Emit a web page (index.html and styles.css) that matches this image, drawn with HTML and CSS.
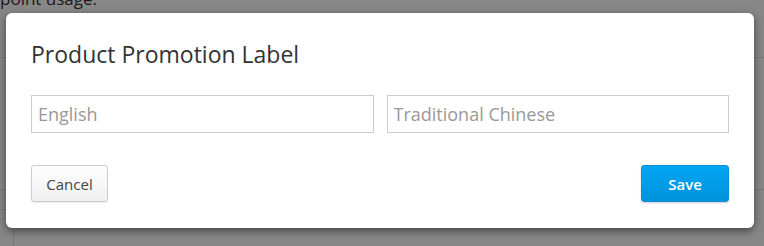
FILE: index.html
```html
<!DOCTYPE html>
<html>
<head>
<meta charset="utf-8">
<link rel="stylesheet" href="styles.css">
</head>
<body>
<div class="page">
  <p class="bg-text">point usage:</p>
  <div class="bg-line bg-line-top"></div>
  <div class="bg-line bg-line-mid"></div>
  <div class="bg-line bg-line-low"></div>
  <div class="bg-vline"></div>
</div>
<div class="overlay"></div>
<div class="modal">
  <h2 class="modal-title">Product Promotion Label</h2>
  <div class="fields">
    <input class="field" type="text" placeholder="English">
    <input class="field" type="text" placeholder="Traditional Chinese">
  </div>
  <div class="actions">
    <button class="btn btn-default">Cancel</button>
    <button class="btn btn-primary">Save</button>
  </div>
</div>
</body>
</html>
```
FILE: styles.css
```css
* { box-sizing: border-box; }
html, body {
  margin: 0;
  padding: 0;
  width: 764px;
  height: 246px;
  overflow: hidden;
  font-family: "Open Sans", "Liberation Sans", sans-serif;
}
body { background: #fff; position: relative; }

.page { position: relative; width: 764px; height: 246px; }
.bg-text {
  margin: 0;
  position: absolute;
  left: 0;
  top: -13px;
  font-size: 17px;
  line-height: 24px;
  color: #333;
}
.bg-line { position: absolute; height: 1px; background: #e0e0e0; left: 0; right: 0; }
.bg-line-top { top: 57px; }
.bg-line-mid { top: 189px; }
.bg-line-low { top: 209px; right: auto; width: 6px; }
.bg-vline { position: absolute; left: 13px; top: 228px; bottom: 0; width: 1px; background: #e0e0e0; }

.overlay {
  position: absolute;
  inset: 0;
  background: rgba(0, 0, 0, 0.47);
}

.modal {
  position: absolute;
  left: 6px;
  top: 13px;
  width: 748px;
  height: 215px;
  background: #fff;
  border-radius: 6px;
  box-shadow: 0 3px 9px rgba(0, 0, 0, 0.5);
  padding: 26px 25px 0 25px;
  display: flex;
  flex-direction: column;
}

.modal-title {
  margin: 0;
  font-size: 23px;
  font-weight: 400;
  color: #333;
  line-height: 31px;
}

.fields {
  display: flex;
  gap: 13px;
  margin-top: 25px;
}
.field {
  flex: 1;
  height: 38px;
  border: 1px solid #ccc;
  border-radius: 0;
  padding: 0 6px;
  font-family: "Open Sans", "Liberation Sans", sans-serif;
  font-size: 18px;
  color: #333;
  outline: none;
  background: #fff;
}
.field::placeholder { color: #999; }

.actions {
  display: flex;
  justify-content: space-between;
  margin-top: 32px;
}
.btn {
  height: 37px;
  font-family: "Open Sans", "Liberation Sans", sans-serif;
  font-size: 15px;
  border-radius: 3px;
  cursor: pointer;
}
.btn-default {
  width: 77px;
  color: #444;
  background: linear-gradient(#fff, #f0f0f0);
  border: 1px solid #ccc;
  box-shadow: 0 1px 1px rgba(0,0,0,0.08);
}
.btn-primary {
  width: 88px;
  color: #fff;
  font-weight: 600;
  background: linear-gradient(#03a5f2, #0192dd);
  border: 1px solid #0a8fd6;
  box-shadow: 0 1px 2px rgba(0,0,0,0.2);
}
```
